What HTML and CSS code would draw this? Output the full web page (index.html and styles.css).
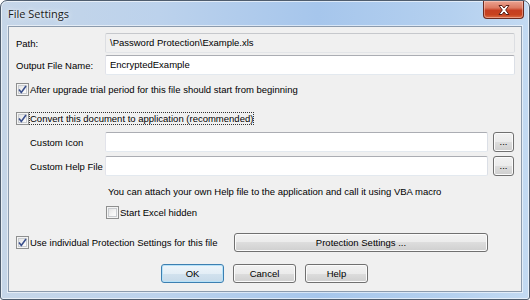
FILE: index.html
```html
<!DOCTYPE html>
<html lang="en">
<head>
    <meta charset="UTF-8">
    <title>File Settings</title>
    <link rel="stylesheet" href="styles.css">
</head>
<body>
    <div class="window">
        <div class="titlebar">
            <span class="title">File Settings</span>
            <div class="close">
                <svg width="16" height="12" viewBox="0 0 16 12">
                    <path d="M3 1.5 L6 1.5 L8 4 L10 1.5 L13 1.5 L9.7 6 L13 10.5 L10 10.5 L8 8 L6 10.5 L3 10.5 L6.3 6 Z" fill="#fff" stroke="#5a2018" stroke-width="1" stroke-linejoin="round"/>
                </svg>
            </div>
        </div>
        <div class="client">
            <div class="field-row row-path">
                <span class="label">Path:</span>
                <div class="field readonly">\Password Protection\Example.xls</div>
            </div>
            <div class="field-row row-output">
                <span class="label">Output File Name:</span>
                <div class="field">EncryptedExample</div>
            </div>
            <div class="row check-row row-check1">
                <span class="box">
                    <svg width="13" height="13" viewBox="0 0 13 13"><path d="M3 6.5 L5.3 9.5 L10 3" fill="none" stroke="#3a4f8c" stroke-width="1.6"/></svg>
                </span>
                <span class="text">After upgrade trial period for this file should start from beginning</span>
            </div>
            <div class="row check-row row-check2">
                <span class="box">
                    <svg width="13" height="13" viewBox="0 0 13 13"><path d="M3 6.5 L5.3 9.5 L10 3" fill="none" stroke="#3a4f8c" stroke-width="1.6"/></svg>
                </span>
                <span class="text focus">Convert this document to application (recommended)</span>
            </div>
            <div class="browse-row row-icon">
                <span class="label sub">Custom Icon</span>
                <div class="field"></div>
                <button class="btn small">...</button>
            </div>
            <div class="browse-row row-help">
                <span class="label sub">Custom Help File</span>
                <div class="field"></div>
                <button class="btn small">...</button>
            </div>
            <div class="row info">You can attach your own Help file to the application and call it using VBA macro</div>
            <div class="row check-row row-excel">
                <span class="box"></span>
                <span class="text">Start Excel hidden</span>
            </div>
            <div class="row protect-row">
                <div class="check-row">
                    <span class="box">
                        <svg width="13" height="13" viewBox="0 0 13 13"><path d="M3 6.5 L5.3 9.5 L10 3" fill="none" stroke="#3a4f8c" stroke-width="1.6"/></svg>
                    </span>
                    <span class="text">Use individual Protection Settings for this file</span>
                </div>
                <button class="btn wide">Protection Settings ...</button>
            </div>
            <div class="row actions">
                <button class="btn default">OK</button>
                <button class="btn">Cancel</button>
                <button class="btn">Help</button>
            </div>
        </div>
    </div>
</body>
</html>
```

FILE: styles.css
```css
body {
    margin: 0;
    width: 530px;
    height: 300px;
    overflow: hidden;
    background: #ffffff;
    font-family: 'Liberation Sans', Arial, sans-serif;
    font-size: 9.5px;
    color: #000;
}

.window {
    width: 530px;
    height: 300px;
    box-sizing: border-box;
    border: 1px solid #4f5d6e;
    border-radius: 7px 7px 3px 3px;
    background: linear-gradient(90deg, #c6d6e8 0%, #bcd2ec 30%, #a6c6ec 60%, #b4d0ef 85%, #c3daf2 100%);
    padding: 0 7px 7px 7px;
    display: flex;
    flex-direction: column;
    box-shadow: inset 0 0 0 1px rgba(255, 255, 255, 0.6);
}

.titlebar {
    height: 25px;
    display: flex;
    align-items: flex-start;
    justify-content: space-between;
    margin-right: -2px;
}

.title {
    font-family: 'Open Sans', 'Noto Sans', sans-serif;
    font-size: 11px;
    color: #1a1a1a;
    margin-top: 5px;
    text-shadow: 0 0 6px #eef3f9, 0 0 3px #eef3f9;
}

.close {
    width: 41px;
    height: 18px;
    box-sizing: border-box;
    border: 1px solid #6b2a20;
    border-top: none;
    border-radius: 0 0 4px 4px;
    background: linear-gradient(#eba391 0%, #dc7a62 40%, #c63e22 55%, #c7421f 80%, #dc6c46 100%);
    box-shadow: inset 0 0 0 1px rgba(255, 220, 210, 0.45);
    display: flex;
    align-items: center;
    justify-content: center;
}

.client {
    flex: 1;
    border: 1px solid #8c9bad;
    background: #f0f0f0;
    display: flex;
    flex-direction: column;
    padding-top: 6px;
    box-shadow: 0 0 0 1px rgba(255, 255, 255, 0.55);
}

.row {
    display: flex;
    align-items: center;
    flex-shrink: 0;
}

.field-row {
    display: grid;
    grid-template-columns: 89px 1fr;
    align-items: center;
    height: 20px;
    padding: 0 6px 0 7px;
    flex-shrink: 0;
}

.browse-row {
    display: grid;
    grid-template-columns: 84px 1fr 21px;
    column-gap: 5px;
    align-items: center;
    height: 20px;
    padding: 0 7px;
    flex-shrink: 0;
}

.label {
    white-space: nowrap;
}

.label.sub {
    padding-left: 14px;
}

.field {
    height: 20px;
    min-width: 0;
    box-sizing: border-box;
    border: 1px solid #abadb3;
    border-color: #abadb3 #dbdfe6 #e3e9ef #e2e3ea;
    border-radius: 2px;
    background: #ffffff;
    padding: 0 4px;
    line-height: 18px;
    white-space: nowrap;
    overflow: hidden;
}

.field.readonly {
    background: #f0f0f0;
    border-color: #c6c8cc #dcdee2 #e3e5e8 #dcdee2;
}

.row-output {
    margin-top: 2px;
}

.check-row {
    display: flex;
    align-items: center;
    height: 18px;
    padding-left: 7px;
}

.row-check1 {
    margin-top: 5px;
}

.row-check2 {
    margin-top: 11px;
}

.box {
    width: 13px;
    height: 13px;
    box-sizing: border-box;
    border: 1px solid #8e8f8f;
    background: linear-gradient(135deg, #dcdcdc 0%, #f6f6f6 60%, #ffffff 100%);
    box-shadow: inset 0 0 0 1px #f4f4f4, inset 0 0 0 2px #c9ccd0;
    position: relative;
    flex-shrink: 0;
}

.box svg {
    position: absolute;
    left: -1px;
    top: -1px;
}

.text {
    white-space: nowrap;
    padding: 1px 1px 1px 1px;
}

.text.focus {
    outline: 1px dotted #333;
    outline-offset: -1px;
}

.row-icon {
    margin-top: 5px;
}

.row-help {
    margin-top: 4px;
}

.btn {
    font-family: inherit;
    font-size: 9.5px;
    color: #000;
    height: 19px;
    box-sizing: border-box;
    border: 1px solid #707070;
    border-radius: 3px;
    background: linear-gradient(#f2f2f2 0%, #ebebeb 50%, #dddddd 50%, #cfcfcf 100%);
    box-shadow: inset 0 0 0 1px #fbfbfb;
    padding: 0;
    width: 63px;
    flex-shrink: 0;
}

.btn.small {
    width: 21px;
    height: 20px;
    line-height: 14px;
}

.btn.default {
    border-color: #3c7fb1;
    background: linear-gradient(#eef5fa 0%, #e3eef6 50%, #d2e2ee 50%, #c7dae9 100%);
    box-shadow: inset 0 0 0 1px #b7e2f8;
}

.info {
    margin-top: 8px;
    height: 15px;
    padding-left: 99px;
    white-space: nowrap;
}

.row-excel {
    margin-top: 6px;
    height: 15px;
    padding-left: 97px;
}

.protect-row {
    margin-top: 13px;
    height: 19px;
    padding-left: 0;
}

.protect-row .check-row {
    width: 218px;
}

.btn.wide {
    width: 254px;
}

.actions {
    margin-top: 12px;
    justify-content: center;
    gap: 9px;
    padding-right: 1px;
}
```
